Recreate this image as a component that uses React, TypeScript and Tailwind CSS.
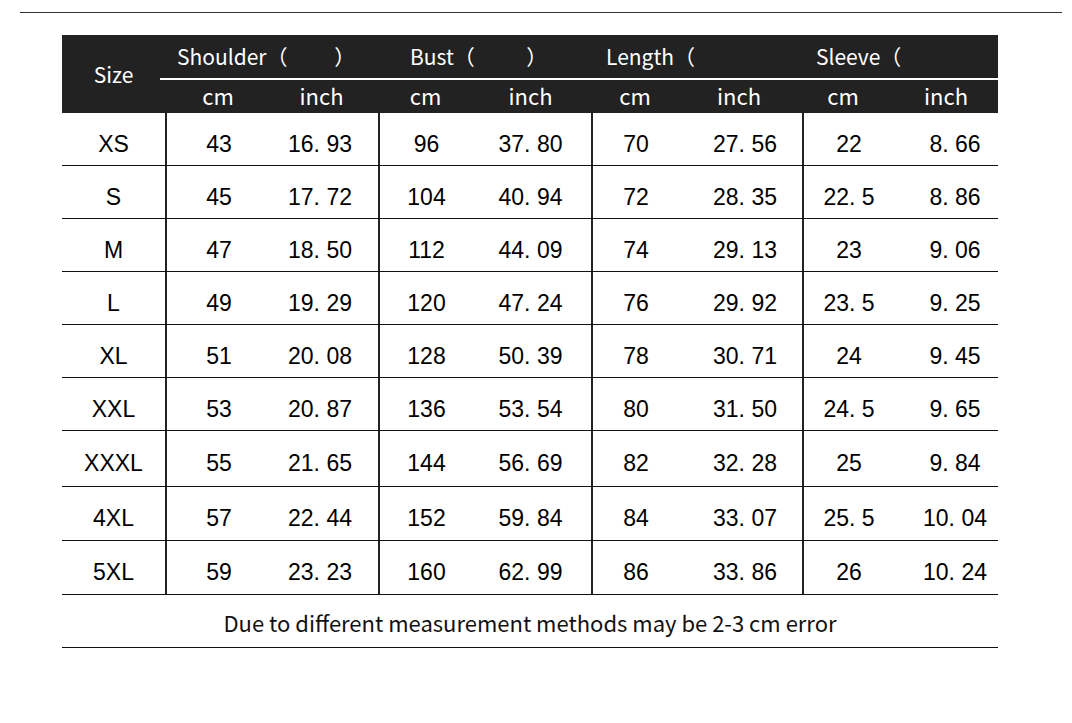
import React from "react";

const rows: { size: string; h: string; v: string[] }[] = [
  { size: "XS", h: "h-[53px]", v: ["43", "16. 93", "96", "37. 80", "70", "27. 56", "22", "8. 66"] },
  { size: "S", h: "h-[53px]", v: ["45", "17. 72", "104", "40. 94", "72", "28. 35", "22. 5", "8. 86"] },
  { size: "M", h: "h-[53px]", v: ["47", "18. 50", "112", "44. 09", "74", "29. 13", "23", "9. 06"] },
  { size: "L", h: "h-[53px]", v: ["49", "19. 29", "120", "47. 24", "76", "29. 92", "23. 5", "9. 25"] },
  { size: "XL", h: "h-[53px]", v: ["51", "20. 08", "128", "50. 39", "78", "30. 71", "24", "9. 45"] },
  { size: "XXL", h: "h-[53px]", v: ["53", "20. 87", "136", "53. 54", "80", "31. 50", "24. 5", "9. 65"] },
  { size: "XXXL", h: "h-[56px]", v: ["55", "21. 65", "144", "56. 69", "82", "32. 28", "25", "9. 84"] },
  { size: "4XL", h: "h-[54px]", v: ["57", "22. 44", "152", "59. 84", "84", "33. 07", "25. 5", "10. 04"] },
  { size: "5XL", h: "h-[54px]", v: ["59", "23. 23", "160", "62. 99", "86", "33. 86", "26", "10. 24"] },
];

// nudges so each value sits where the picture has it
const bodyPad = [
  "border-l-2 border-[#222]",
  "pr-[9px]",
  "border-l-2 border-[#222] pr-[11px]",
  "pr-[14px]",
  "border-l-2 border-[#222] pr-[17px]",
  "pr-[8px]",
  "border-l-2 border-[#222]",
  "pl-[18px]",
];
const headPad = ["", "pr-[6px]", "pr-[11px]", "pr-[14px]", "pr-[17px]", "pr-[20px]", "pr-[10px]", ""];

const cols = "grid grid-cols-[103px_106px_107px_106px_107px_105px_106px_92px_104px]";

export default function App() {
  return (
    <div className="w-[1072px] h-[723px] bg-white pt-[12px] font-['Noto_Sans_CJK_SC','Noto_Sans',sans-serif] text-[#111]">
      <div className="ml-[20px] mr-[10px] h-px bg-[#333]" />

      <div className="ml-[62px] mt-[22px] w-[936px]">
        {/* Header */}
        <div className={`${cols} bg-[#222] text-white h-[78px]`}>
          <div className="row-span-2 flex items-center justify-center text-[21px] pt-[1px]">Size</div>
          <div className="col-span-2 h-[45px] flex items-center pl-[12px] text-[21px] border-b-2 border-white -ml-[5px]">
            <span className="ml-[5px] whitespace-pre">Shoulder（　　 ）</span>
          </div>
          <div className="col-span-2 h-[45px] flex items-center pl-[32px] text-[21px] border-b-2 border-white whitespace-pre">
            Bust（　 　 ）
          </div>
          <div className="col-span-2 h-[45px] flex items-center pl-[15px] text-[21px] border-b-2 border-white">
            Length（
          </div>
          <div className="col-span-2 h-[45px] flex items-center pl-[14px] text-[21px] border-b-2 border-white">
            Sleeve（
          </div>
          {["cm", "inch", "cm", "inch", "cm", "inch", "cm", "inch"].map((t, i) => (
            <div key={i} className={`h-[33px] flex items-center justify-center text-[22px] leading-none pb-[3px] ${headPad[i]}`}>
              {t}
            </div>
          ))}
        </div>

        {/* Body */}
        {rows.map((r) => (
          <div
            key={r.size}
            className={`${cols} ${r.h} border-b border-[#111] text-[23px] text-black font-['Liberation_Sans',Arial,sans-serif]`}
          >
            <div className="flex items-center justify-center pt-[10px]">{r.size}</div>
            {r.v.map((val, i) => (
              <div key={i} className={`flex items-center justify-center pt-[10px] ${bodyPad[i]}`}>
                {val}
              </div>
            ))}
          </div>
        ))}

        {/* Note */}
        <div className="h-[53px] border-b border-[#111] flex items-center justify-center text-[22px] pt-[3px]">
          Due to different measurement methods may be 2-3 cm error
        </div>
      </div>
    </div>
  );
}
